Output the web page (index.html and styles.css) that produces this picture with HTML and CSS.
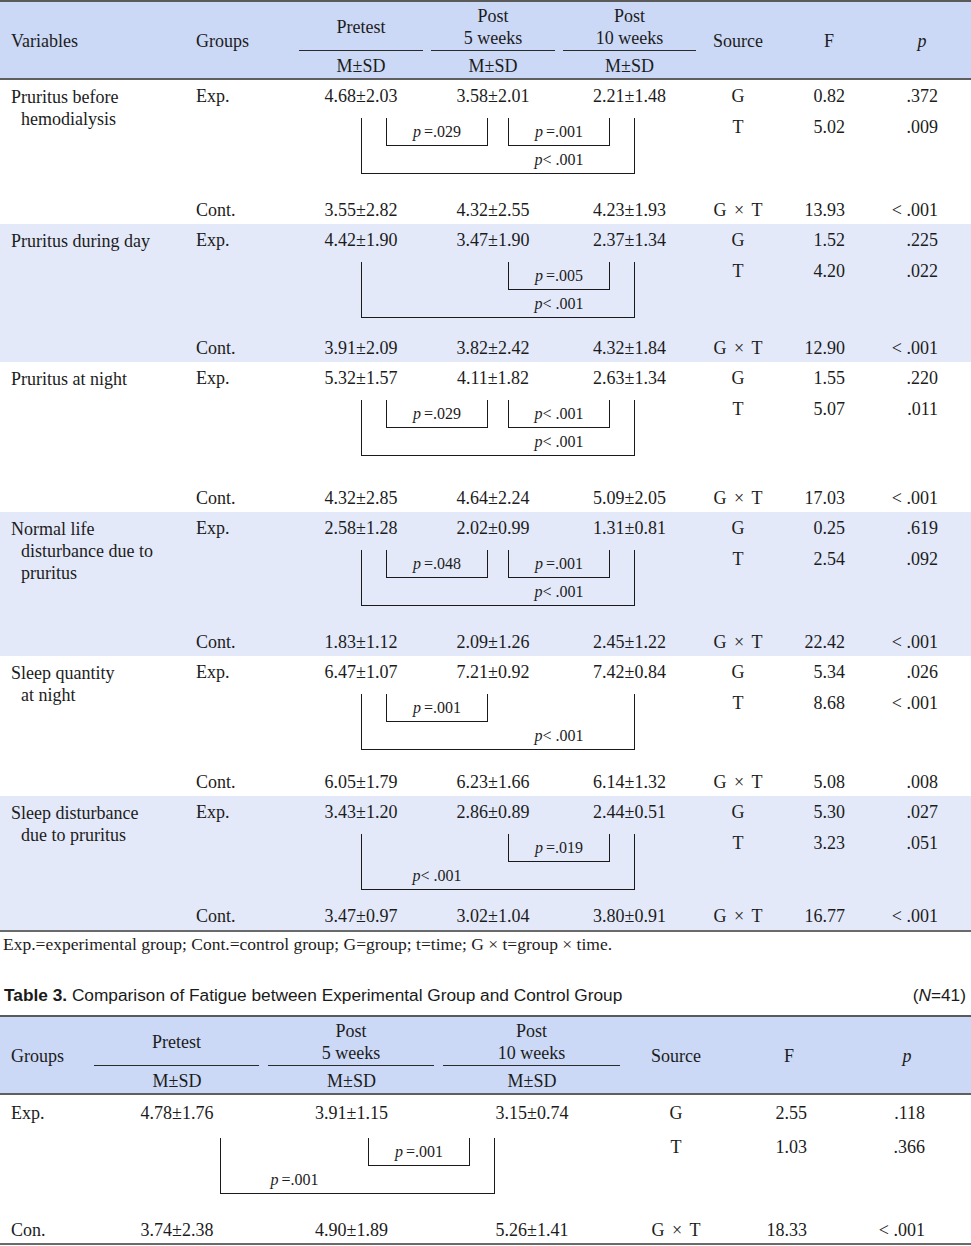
FILE: index.html
```html
<!DOCTYPE html>
<html lang="en">
<head>
<meta charset="utf-8">
<title>Tables 2 and 3</title>
<link rel="stylesheet" href="styles.css">
</head>
<body>
<section class="tbl t2">
  <div class="thead">
    <div class="th th-var c1">Variables</div>
    <div class="th th-grp c2">Groups</div>
    <div class="th th-time c3">Pretest</div>
    <div class="th th-time c4">Post<br>5 weeks</div>
    <div class="th th-time c5">Post<br>10 weeks</div>
    <div class="th th-src c6">Source</div>
    <div class="th th-f c7">F</div>
    <div class="th th-p c8"><i>p</i></div>
    <div class="th th-msd c3">M±SD</div>
    <div class="th th-msd c4">M±SD</div>
    <div class="th th-msd c5">M±SD</div>
  </div>

  <div class="grp">
    <div class="var">Pruritus before<br>hemodialysis</div>
    <div class="g">Exp.</div>
    <div class="v">4.68±2.03</div><div class="v">3.58±2.01</div><div class="v">2.21±1.48</div>
    <div class="src">G</div><div class="f">0.82</div><div class="p">.372</div>
    <div class="bk-cell gap20">
      <div class="bk">
        <div class="in k2"><i>p</i>&thinsp;=.029</div>
        <div class="in k4"><i>p</i>&thinsp;=.001</div>
        <div class="ol k4"><i>p</i>&lt; .001</div>
      </div>
    </div>
    <div class="src mid">T</div><div class="f mid">5.02</div><div class="p mid">.009</div>
    <div class="g">Cont.</div>
    <div class="v">3.55±2.82</div><div class="v">4.32±2.55</div><div class="v">4.23±1.93</div>
    <div class="src">G × T</div><div class="f">13.93</div><div class="p">&lt; .001</div>
  </div>

  <div class="grp band">
    <div class="var">Pruritus during day</div>
    <div class="g">Exp.</div>
    <div class="v">4.42±1.90</div><div class="v">3.47±1.90</div><div class="v">2.37±1.34</div>
    <div class="src">G</div><div class="f">1.52</div><div class="p">.225</div>
    <div class="bk-cell gap14">
      <div class="bk">
        <div class="in k4"><i>p</i>&thinsp;=.005</div>
        <div class="ol k4"><i>p</i>&lt; .001</div>
      </div>
    </div>
    <div class="src mid">T</div><div class="f mid">4.20</div><div class="p mid">.022</div>
    <div class="g">Cont.</div>
    <div class="v">3.91±2.09</div><div class="v">3.82±2.42</div><div class="v">4.32±1.84</div>
    <div class="src">G × T</div><div class="f">12.90</div><div class="p">&lt; .001</div>
  </div>

  <div class="grp">
    <div class="var">Pruritus at night</div>
    <div class="g">Exp.</div>
    <div class="v">5.32±1.57</div><div class="v">4.11±1.82</div><div class="v">2.63±1.34</div>
    <div class="src">G</div><div class="f">1.55</div><div class="p">.220</div>
    <div class="bk-cell gap26">
      <div class="bk">
        <div class="in k2"><i>p</i>&thinsp;=.029</div>
        <div class="in k4"><i>p</i>&lt; .001</div>
        <div class="ol k4"><i>p</i>&lt; .001</div>
      </div>
    </div>
    <div class="src mid">T</div><div class="f mid">5.07</div><div class="p mid">.011</div>
    <div class="g">Cont.</div>
    <div class="v">4.32±2.85</div><div class="v">4.64±2.24</div><div class="v">5.09±2.05</div>
    <div class="src">G × T</div><div class="f">17.03</div><div class="p">&lt; .001</div>
  </div>

  <div class="grp band">
    <div class="var">Normal life<br>disturbance due to<br>pruritus</div>
    <div class="g">Exp.</div>
    <div class="v">2.58±1.28</div><div class="v">2.02±0.99</div><div class="v">1.31±0.81</div>
    <div class="src">G</div><div class="f">0.25</div><div class="p">.619</div>
    <div class="bk-cell gap20">
      <div class="bk">
        <div class="in k2"><i>p</i>&thinsp;=.048</div>
        <div class="in k4"><i>p</i>&thinsp;=.001</div>
        <div class="ol k4"><i>p</i>&lt; .001</div>
      </div>
    </div>
    <div class="src mid">T</div><div class="f mid">2.54</div><div class="p mid">.092</div>
    <div class="g">Cont.</div>
    <div class="v">1.83±1.12</div><div class="v">2.09±1.26</div><div class="v">2.45±1.22</div>
    <div class="src">G × T</div><div class="f">22.42</div><div class="p">&lt; .001</div>
  </div>

  <div class="grp">
    <div class="var">Sleep quantity<br>at night</div>
    <div class="g">Exp.</div>
    <div class="v">6.47±1.07</div><div class="v">7.21±0.92</div><div class="v">7.42±0.84</div>
    <div class="src">G</div><div class="f">5.34</div><div class="p">.026</div>
    <div class="bk-cell gap16">
      <div class="bk">
        <div class="in k2"><i>p</i>&thinsp;=.001</div>
        <div class="ol k4"><i>p</i>&lt; .001</div>
      </div>
    </div>
    <div class="src mid">T</div><div class="f mid">8.68</div><div class="p mid">&lt; .001</div>
    <div class="g">Cont.</div>
    <div class="v">6.05±1.79</div><div class="v">6.23±1.66</div><div class="v">6.14±1.32</div>
    <div class="src">G × T</div><div class="f">5.08</div><div class="p">.008</div>
  </div>

  <div class="grp band">
    <div class="var">Sleep disturbance<br>due to pruritus</div>
    <div class="g">Exp.</div>
    <div class="v">3.43±1.20</div><div class="v">2.86±0.89</div><div class="v">2.44±0.51</div>
    <div class="src">G</div><div class="f">5.30</div><div class="p">.027</div>
    <div class="bk-cell gap10">
      <div class="bk">
        <div class="in k4"><i>p</i>&thinsp;=.019</div>
        <div class="ol k2"><i>p</i>&lt; .001</div>
      </div>
    </div>
    <div class="src mid">T</div><div class="f mid">3.23</div><div class="p mid">.051</div>
    <div class="g">Cont.</div>
    <div class="v">3.47±0.97</div><div class="v">3.02±1.04</div><div class="v">3.80±0.91</div>
    <div class="src">G × T</div><div class="f">16.77</div><div class="p">&lt; .001</div>
  </div>
</section>
<p class="note">Exp.=experimental group; Cont.=control group; G=group; t=time; G × t=group × time.</p>

<div class="caption">
  <span><b>Table 3.</b> Comparison of Fatigue between Experimental Group and Control Group</span>
  <span>(<i>N</i>=41)</span>
</div>
<section class="tbl t3">
  <div class="thead">
    <div class="th th-var c1">Groups</div>
    <div class="th th-time c2">Pretest</div>
    <div class="th th-time c3">Post<br>5 weeks</div>
    <div class="th th-time c4">Post<br>10 weeks</div>
    <div class="th th-src c5">Source</div>
    <div class="th th-f c6">F</div>
    <div class="th th-p c7"><i>p</i></div>
    <div class="th th-msd c2">M±SD</div>
    <div class="th th-msd c3">M±SD</div>
    <div class="th th-msd c4">M±SD</div>
  </div>
  <div class="grp">
    <div class="g k1">Exp.</div>
    <div class="v">4.78±1.76</div><div class="v">3.91±1.15</div><div class="v">3.15±0.74</div>
    <div class="src">G</div><div class="f">2.55</div><div class="p">.118</div>
    <div class="bk-cell gap21">
      <div class="bk">
        <div class="in k2"><i>p</i>&thinsp;=.001</div>
        <div class="ol k1"><i>p</i>&thinsp;=.001</div>
      </div>
    </div>
    <div class="src mid">T</div><div class="f mid">1.03</div><div class="p mid">.366</div>
    <div class="g k1">Con.</div>
    <div class="v">3.74±2.38</div><div class="v">4.90±1.89</div><div class="v">5.26±1.41</div>
    <div class="src">G × T</div><div class="f">18.33</div><div class="p">&lt; .001</div>
  </div>
</section>
</body>
</html>
```

FILE: styles.css
```css
html, body {
  margin: 0;
  padding: 0;
  background: #ffffff;
}
body {
  width: 971px;
  font-family: "Liberation Serif", "Times New Roman", serif;
  font-size: 18px;
  color: #1c1c1c;
}

/* ---------- generic table ---------- */
.tbl {
  border-top: 2px solid #5a5a5a;
  border-bottom: 2px solid #6a6a6a;
}
.t2 {
  --cols: 186px 109px 132px 132px 141px 76px 106px 80px 9px;
}
.t3 {
  --cols: 90px 174px 175px 186px 102px 124px 112px 8px;
}

.thead {
  display: grid;
  grid-template-columns: var(--cols);
  grid-template-rows: 49px 27px;
  background: #cbd8f6;
  border-bottom: 2px solid #5f5f5f;
}
.th {
  display: flex;
  align-items: center;
  line-height: 22px;
  padding-top: 2px;
}
.th-var, .th-grp, .th-src, .th-f, .th-p {
  grid-row: 1 / span 2;
}
.th-var { padding-left: 11px; }
.th-grp { padding-left: 10px; }
.th-time {
  grid-row: 1;
  justify-content: center;
  text-align: center;
  margin: 0 4px 0 4px;
  border-bottom: 1px solid #2a2a2a;
  padding-top: 3px;
  padding-bottom: 1px;
}
.t3 .th-time { margin: 0 5px 0 4px; }
.th-src, .th-f, .th-p, .th-msd {
  justify-content: center;
}
.th-msd { grid-row: 2; padding-top: 2px; }

.c1 { grid-column: 1; }
.c2 { grid-column: 2; }
.c3 { grid-column: 3; }
.c4 { grid-column: 4; }
.c5 { grid-column: 5; }
.c6 { grid-column: 6; }
.c7 { grid-column: 7; }
.c8 { grid-column: 8; }

/* ---------- groups ---------- */
.grp {
  display: grid;
  grid-template-columns: var(--cols);
  grid-template-rows: 32px auto 30px;
  line-height: 30px;
}
.grp.band { background: #e3e9f9; }

.var {
  grid-column: 1;
  grid-row: span 2;
  padding: 6px 0 0 21px;
  text-indent: -10px;
  line-height: 22px;
}
.g { grid-column: 2; padding-left: 10px; }
.v { text-align: center; }
.src { grid-column: 6; text-align: center; word-spacing: 3px; }
.f { grid-column: 7; text-align: right; padding-right: 37px; }
.p { grid-column: 8; text-align: right; padding-right: 24px; }

.grp > .v, .grp > .src, .grp > .f, .grp > .p, .grp > .g {
  line-height: 31px;
  padding-top: 1px;
}
.grp > .mid { line-height: 28px; padding-top: 1px; }

/* ---------- significance brackets ---------- */
.bk-cell {
  grid-column: 3 / span 3;
  padding: 6px 0 20px 66px;
  line-height: normal;
}
.bk-cell.gap14 { padding-bottom: 14px; }
.bk-cell.gap26 { padding-bottom: 26px; }
.bk-cell.gap16 { padding-bottom: 16px; }
.bk-cell.gap10 { padding-bottom: 10px; }
.bk {
  width: 274px;
  box-sizing: border-box;
  border: 1px solid #1a1a1a;
  border-top: 0;
  display: grid;
  grid-template-columns: 24px 102px 20px 102px;
  grid-template-rows: 28px 27px;
  font-size: 16px;
}
.in {
  grid-row: 1;
  border: 1px solid #1a1a1a;
  border-top: 0;
  text-align: center;
  line-height: 27px;
}
.ol {
  grid-row: 2;
  text-align: center;
  line-height: 27px;
}
.k1 { grid-column: 1; }
.k2 { grid-column: 2; }
.k3 { grid-column: 3; }
.k4 { grid-column: 4; }

/* ---------- table 3 specifics ---------- */
.t3 .grp { grid-template-rows: 34px auto 28px; }
.t3 .g { padding-left: 11px; }
.t3 .grp > .v, .t3 .grp > .src, .t3 .grp > .f, .t3 .grp > .p, .t3 .grp > .g { line-height: 34px; }
.t3 .src { grid-column: 5; }
.t3 .f { grid-column: 6; padding-right: 44px; }
.t3 .p { grid-column: 7; padding-right: 38px; }
.t3 .grp > .mid { line-height: 32px; padding-top: 2px; }
.t3 .grp > div:nth-last-child(-n+7) { line-height: 28px; }
.t3 .bk-cell {
  grid-column: 2 / span 3;
  padding: 9px 0 21px 130px;
}
.t3 .bk {
  width: 275px;
  grid-template-columns: 147px 102px;
}

/* ---------- notes & caption ---------- */
.note {
  margin: 2px 0 0 0;
  padding-left: 3px;
  font-size: 17.5px;
  line-height: 20px;
}
.caption {
  display: flex;
  justify-content: space-between;
  margin: 30px 0 0 0;
  padding: 0 5px 0 4px;
  font-family: "Liberation Sans", Arial, sans-serif;
  font-size: 17.3px;
  line-height: 22px;
  height: 31px;
  color: #1a1a1a;
}
```
